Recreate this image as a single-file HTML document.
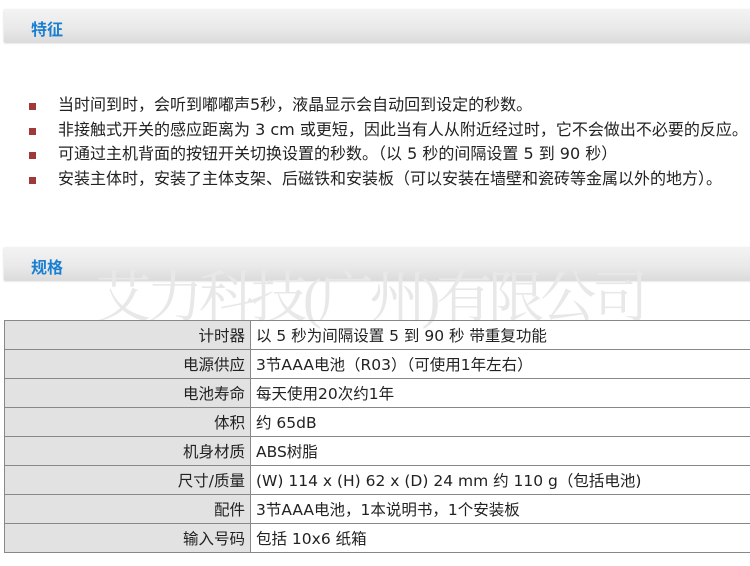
<!DOCTYPE html>
<html><head><meta charset="utf-8"><style>
body{margin:0;width:750px;height:566px;background:#fff;position:relative;overflow:hidden;font-family:"DejaVu Sans","Noto Sans CJK SC",sans-serif;color:#222}
.bar{position:absolute;left:4px;width:760px;height:33px;background:linear-gradient(#f3f3f3,#e9e9e9 60%,#dcdcdc);box-shadow:0 1px 2px #ccc}
.bar span{position:absolute;left:27px;top:7px;font-size:16px;font-weight:bold;color:#1a7fd0;font-family:"Noto Sans CJK SC",sans-serif}
ul{position:absolute;left:28px;top:93px;margin:0;padding:0;list-style:none;font-size:16px;line-height:24.5px}
li{position:relative;padding-left:30px;white-space:nowrap}
li:before{content:"";position:absolute;left:1px;top:10px;width:7px;height:7px;background:#a03a3a}
.wm{position:absolute;left:95px;top:254px;font-size:56px;color:#e8e8e8;white-space:nowrap;letter-spacing:-4px;font-family:"Liberation Serif","Noto Serif CJK SC",serif}
table{position:absolute;left:4px;top:320px;border-collapse:collapse;width:760px;font-size:15.5px}
td{border:1.5px solid #888;height:28px;padding:0 5px;white-space:nowrap}
td.k{background:#e2e2e2;text-align:right;width:235px}
</style></head><body>
<div class="bar" style="top:9px"><span>特征</span></div>
<ul>
<li>当时间到时，会听到嘟嘟声5秒，液晶显示会自动回到设定的秒数。</li>
<li>非接触式开关的感应距离为 3 cm 或更短，因此当有人从附近经过时，它不会做出不必要的反应。</li>
<li>可通过主机背面的按钮开关切换设置的秒数。（以 5 秒的间隔设置 5 到 90 秒）</li>
<li>安装主体时，安装了主体支架、后磁铁和安装板（可以安装在墙壁和瓷砖等金属以外的地方）。</li>
</ul>
<div class="bar" style="top:247px"><span>规格</span></div>
<div class="wm">艾力科技(广州)有限公司</div>
<table>
<tr><td class="k">计时器</td><td>以 5 秒为间隔设置 5 到 90 秒 带重复功能</td></tr>
<tr><td class="k">电源供应</td><td>3节AAA电池（R03）（可使用1年左右）</td></tr>
<tr><td class="k">电池寿命</td><td>每天使用20次约1年</td></tr>
<tr><td class="k">体积</td><td>约 65dB</td></tr>
<tr><td class="k">机身材质</td><td>ABS树脂</td></tr>
<tr><td class="k">尺寸/质量</td><td>(W) 114 x (H) 62 x (D) 24 mm 约 110 g（包括电池)</td></tr>
<tr><td class="k">配件</td><td>3节AAA电池，1本说明书，1个安装板</td></tr>
<tr><td class="k">输入号码</td><td>包括 10x6 纸箱</td></tr>
</table>
</body></html>
